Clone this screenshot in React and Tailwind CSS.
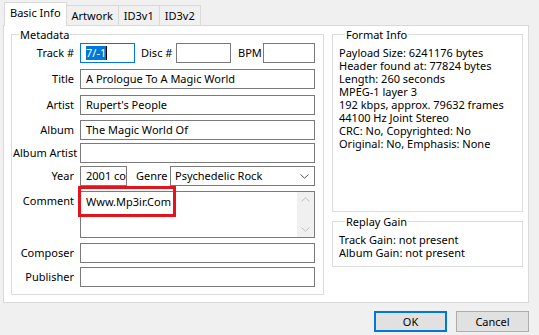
import React from 'react';

const Chevron = ({ up, className }) => (
  <svg width="9" height="5" viewBox="0 0 9 5" className={className}>
    <path d={up ? 'M0.5 4.5 L4.5 0.8 L8.5 4.5' : 'M0.5 0.5 L4.5 4.2 L8.5 0.5'} fill="none" stroke="currentColor" strokeWidth="1" />
  </svg>
);

const Field = ({ children, className = '' }) => (
  <div className={`h-[20px] border border-[#7a7a7a] bg-white flex items-center px-[5px] overflow-hidden ${className}`}>
    {children}
  </div>
);

const Row = ({ label, children, className = '' }) => (
  <div className={`flex items-start ${className}`}>
    <div className="w-[61px] shrink-0 text-right leading-[20px]">{label}</div>
    <div className="ml-[6px] flex-1 min-w-0">{children}</div>
  </div>
);

const Group = ({ title, className = '', children }) => (
  <fieldset className={`border border-[#dcdcdc] px-0 ${className}`}>
    <legend className="ml-[6px] px-[1px] leading-[15px]">{title}</legend>
    {children}
  </fieldset>
);

export default function App() {
  const formatInfo = [
    'Payload Size: 6241176 bytes',
    'Header found at: 77824 bytes',
    'Length: 260 seconds',
    'MPEG-1 layer 3',
    '192 kbps, approx. 79632 frames',
    '44100 Hz Joint Stereo',
    'CRC: No, Copyrighted: No',
    'Original: No, Emphasis: None',
  ];

  return (
    <div className="w-[539px] h-[335px] bg-[#f0f0f0] text-[11px] text-black font-['Noto_Sans',sans-serif] whitespace-nowrap overflow-hidden">
      {/* tabs */}
      <div className="flex items-end pl-[4px] pt-[2px] h-[25px]">
        <div className="h-[24px] px-[5px] bg-white border border-b-0 border-[#d9d9d9] leading-[20px] relative z-10 -mb-px">Basic Info</div>
        <div className="h-[20px] px-[5px] border border-l-0 border-b-0 border-[#d9d9d9] leading-[19px]">Artwork</div>
        <div className="h-[20px] px-[5px] border border-l-0 border-b-0 border-[#d9d9d9] leading-[19px]">ID3v1</div>
        <div className="h-[20px] px-[5px] border border-l-0 border-b-0 border-[#d9d9d9] leading-[19px]">ID3v2</div>
      </div>

      {/* tab page */}
      <div className="ml-[3px] w-[526px] h-[278px] bg-white border border-[#d9d9d9] flex pl-[7px] pt-[1px]">
        <Group title="Metadata" className="w-[313px] h-[268px] pl-[1px] pr-[8px]">
          <div className="pt-[1px]">
            <Row label="Track #">
              <div className="flex items-start">
                <div className="w-[55px] h-[20px] border border-[#0078d7] bg-white flex items-center px-[5px]">
                  <span className="bg-[#0078d7] text-white leading-[14px]">7/-1</span>
                  <span className="w-px h-[14px] bg-black" />
                </div>
                <div className="w-[41px] pl-[6px] leading-[20px]">Disc #</div>
                <div className="w-[55px] h-[20px] border border-[#7a7a7a] bg-white" />
                <div className="w-[32px] pl-[7px] leading-[20px]">BPM</div>
                <div className="flex-1 h-[20px] border border-[#7a7a7a] bg-white" />
              </div>
            </Row>
            <Row label="Title" className="mt-[6px]"><Field>A Prologue To A Magic World</Field></Row>
            <Row label="Artist" className="mt-[6px]"><Field>Rupert's People</Field></Row>
            <Row label="Album" className="mt-[5px]"><Field>The Magic World Of</Field></Row>
            <Row label="Album Artist" className="mt-[3px]"><Field /></Row>
            <Row label="Year" className="mt-[3px]">
              <div className="flex items-start">
                <Field className="w-[47px] px-[4px]">2001 co</Field>
                <div className="w-[43px] pl-[9px] leading-[20px]">Genre</div>
                <div className="flex-1 h-[20px] border border-[#7a7a7a] bg-white flex items-center pl-[4px] pr-[5px]">
                  <span className="flex-1">Psychedelic Rock</span>
                  <Chevron className="text-[#555]" />
                </div>
              </div>
            </Row>
            <Row label="Comment" className="mt-[5px]">
              <div className="relative">
                <div className="h-[47px] border border-[#7a7a7a] bg-white flex">
                  <div className="flex-1 px-[5px] pt-[1px] leading-[18px]">Www.Mp3ir.Com</div>
                  <div className="w-[17px] bg-[#f0f0f0] flex flex-col items-center justify-between py-[5px] text-[#c0c0c0]">
                    <Chevron up />
                    <Chevron />
                  </div>
                </div>
                <div className="absolute left-[-2px] top-[-5px] w-[98px] h-[31px] border-[3px] border-[#e3141c]" />
              </div>
            </Row>
            <Row label="Composer" className="mt-[5px]"><Field /></Row>
            <Row label="Publisher" className="mt-[4px]"><Field /></Row>
          </div>
        </Group>

        <div className="ml-[8px] w-[191px] flex flex-col">
          <Group title="Format Info" className="h-[185px] pl-[6px]">
            <div className="leading-[13px] pt-[4px]">
              {formatInfo.map((line) => (
                <div key={line}>{line}</div>
              ))}
            </div>
          </Group>
          <Group title="Replay Gain" className="mt-[2px] h-[53px] pl-[6px]">
            <div className="leading-[13px] pt-[4px]">
              <div>Track Gain: not present</div>
              <div>Album Gain: not present</div>
            </div>
          </Group>
        </div>
      </div>

      {/* buttons */}
      <div className="flex justify-end gap-[9px] pr-[10px] mt-[8px]">
        <button className="w-[73px] h-[21px] bg-[#e1e1e1] border-2 border-[#0078d7] leading-[17px]">OK</button>
        <button className="w-[73px] h-[21px] bg-[#e1e1e1] border border-[#adadad] leading-[19px]">Cancel</button>
      </div>
    </div>
  );
}
